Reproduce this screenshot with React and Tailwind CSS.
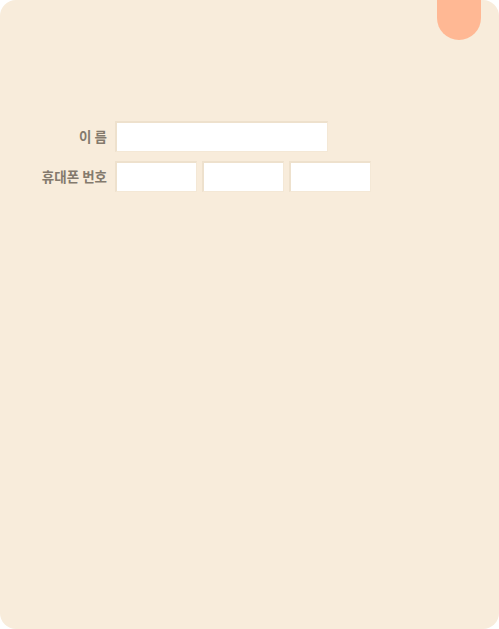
export default function App() {
  const inputCls =
    'h-[31px] bg-white border-t-2 border-l-2 border-r border-b border-t-[#eee1cd] border-l-[#eee1cd] border-r-[#f4e8d6] border-b-[#f4e8d6] outline-none';

  return (
    <div className="w-[499px] h-[629px] bg-white">
      <div className="relative w-full h-full rounded-2xl bg-[#f8ecdb] pt-[121px] overflow-hidden font-['Noto_Sans_CJK_KR',sans-serif]">
        {/* top tab */}
        <div className="absolute top-0 right-[18px] w-[44px] h-[40px] rounded-b-full bg-[#ffb894]" />

        <div className="flex flex-col gap-[9px]">
          <div className="flex items-center gap-2">
            <label className="w-[107px] text-right text-[13.5px] font-bold text-[#847a6d]">이 름</label>
            <input type="text" className={`w-[213px] ${inputCls}`} />
          </div>
          <div className="flex items-center gap-2">
            <label className="w-[107px] text-right text-[13.5px] font-bold text-[#847a6d]">휴대폰 번호</label>
            <div className="flex gap-[5px]">
              <input type="text" className={`w-[82px] ${inputCls}`} />
              <input type="text" className={`w-[82px] ${inputCls}`} />
              <input type="text" className={`w-[82px] ${inputCls}`} />
            </div>
          </div>
        </div>
      </div>
    </div>
  );
}
